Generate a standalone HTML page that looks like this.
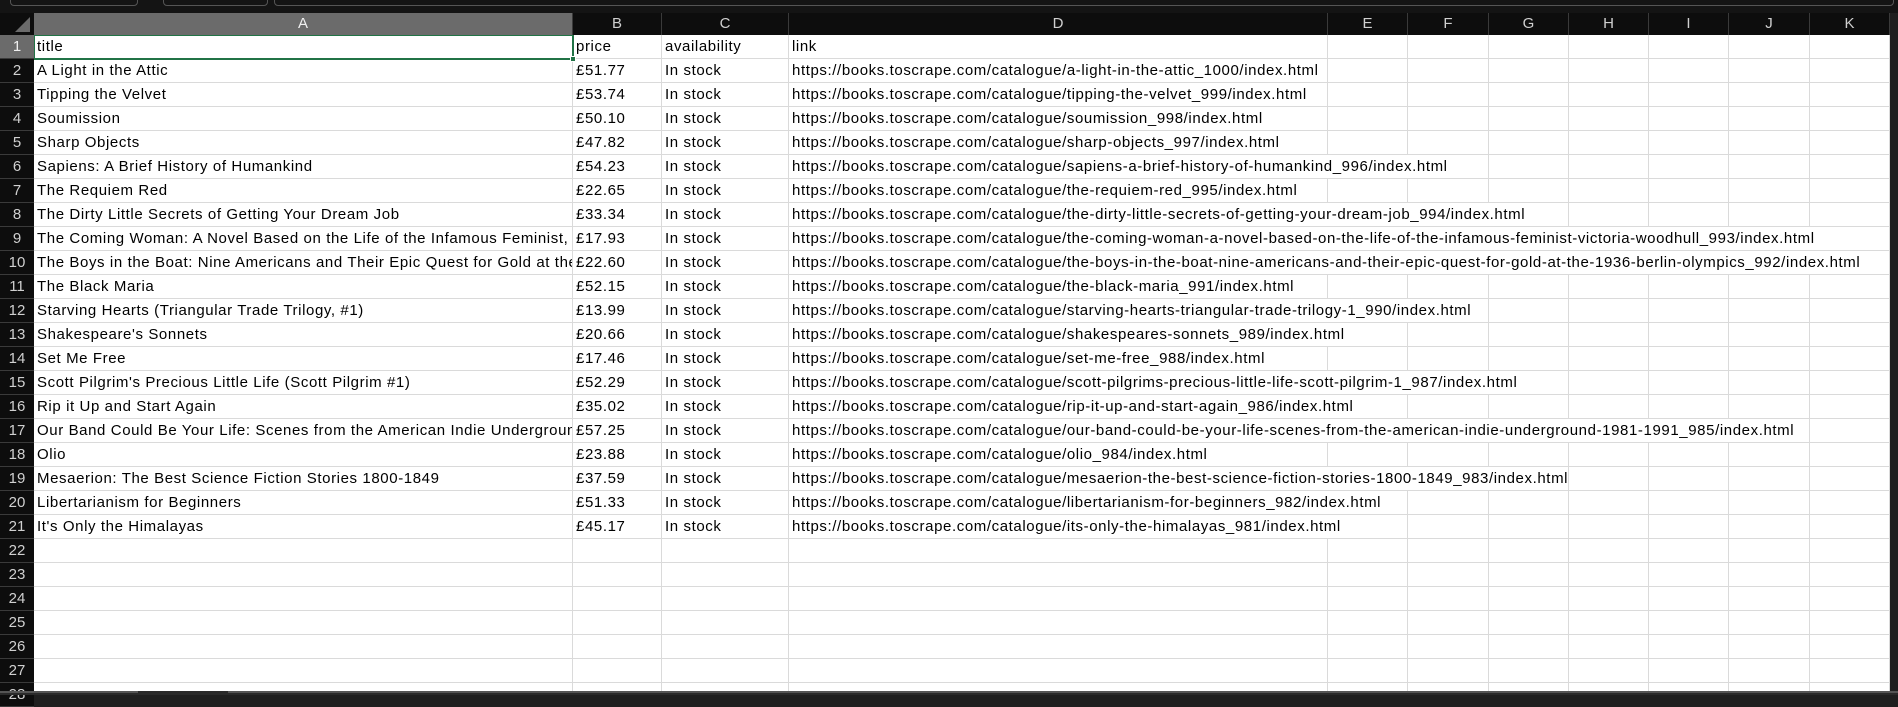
<!DOCTYPE html>
<html><head><meta charset="utf-8"><style>
*{margin:0;padding:0;box-sizing:border-box}
body{width:1898px;height:695px;overflow:hidden;background:#1f1f1f;font-family:"Liberation Sans",sans-serif;position:relative}
#top{position:absolute;left:0;top:0;width:1898px;height:13px;background:#141414}
.tab{position:absolute;top:-6px;height:12px;border:1px solid #555;border-radius:4px}
#sheet{position:absolute;left:34px;top:35px;width:1856px;height:656px;background:#fff;overflow:hidden}
.hdr{position:absolute;top:13px;height:22px;background:#0d0d0d;color:#d0d0d0;font-size:15px;text-align:center;line-height:22px;border-right:1px solid #3a3a3a}
.rh{position:absolute;left:0;width:34px;height:24px;background:#0d0d0d;color:#d0d0d0;font-size:15px;text-align:center;line-height:24px;border-bottom:1px solid #3a3a3a}
.vl{position:absolute;top:0;width:1px;height:656px;background:#dadada}
.hl{position:absolute;left:0;width:1856px;height:1px;background:#dadada}
.t{position:absolute;font-size:15px;letter-spacing:0.6px;color:#000;white-space:nowrap;line-height:24px;height:23px;overflow:hidden}
#bot{position:absolute;left:0;top:691px;width:1898px;height:4px;background:#2a2a2a}
</style></head><body>
<div id="top"><div class="tab" style="left:10px;width:128px"></div><div class="tab" style="left:163px;width:105px"></div><div class="tab" style="left:274px;width:1620px"></div></div>
<div style="position:absolute;left:0;top:13px;width:34px;height:22px;background:#0d0d0d"><svg width="34" height="22"><polygon points="30,4 30,19 15,19" fill="#6b6b6b"/></svg></div>
<div class="hdr" style="left:34px;width:539px;background:#6b6b6b;color:#f0f0f0">A</div>
<div class="hdr" style="left:573px;width:89px">B</div>
<div class="hdr" style="left:662px;width:127px">C</div>
<div class="hdr" style="left:789px;width:539px">D</div>
<div class="hdr" style="left:1328px;width:80px">E</div>
<div class="hdr" style="left:1408px;width:81px">F</div>
<div class="hdr" style="left:1489px;width:80px">G</div>
<div class="hdr" style="left:1569px;width:80px">H</div>
<div class="hdr" style="left:1649px;width:80px">I</div>
<div class="hdr" style="left:1729px;width:81px">J</div>
<div class="hdr" style="left:1810px;width:80px">K</div>
<div class="hdr" style="left:1890px;width:8px;background:#1f1f1f;border:none"></div>
<div id="rows"></div>
<div id="sheet"></div>
<div id="bot"><div style="position:absolute;left:0;top:0;width:138px;height:2px;background:#555"></div><div style="position:absolute;left:228px;top:0;width:1670px;height:2px;background:#555"></div></div>
<script>
var rows=[
["title","price","availability","link"],
["A Light in the Attic","£51.77","In stock","https://books.toscrape.com/catalogue/a-light-in-the-attic_1000/index.html"],
["Tipping the Velvet","£53.74","In stock","https://books.toscrape.com/catalogue/tipping-the-velvet_999/index.html"],
["Soumission","£50.10","In stock","https://books.toscrape.com/catalogue/soumission_998/index.html"],
["Sharp Objects","£47.82","In stock","https://books.toscrape.com/catalogue/sharp-objects_997/index.html"],
["Sapiens: A Brief History of Humankind","£54.23","In stock","https://books.toscrape.com/catalogue/sapiens-a-brief-history-of-humankind_996/index.html"],
["The Requiem Red","£22.65","In stock","https://books.toscrape.com/catalogue/the-requiem-red_995/index.html"],
["The Dirty Little Secrets of Getting Your Dream Job","£33.34","In stock","https://books.toscrape.com/catalogue/the-dirty-little-secrets-of-getting-your-dream-job_994/index.html"],
["The Coming Woman: A Novel Based on the Life of the Infamous Feminist, Victoria Woodhull","£17.93","In stock","https://books.toscrape.com/catalogue/the-coming-woman-a-novel-based-on-the-life-of-the-infamous-feminist-victoria-woodhull_993/index.html"],
["The Boys in the Boat: Nine Americans and Their Epic Quest for Gold at the 1936 Berlin Olympics","£22.60","In stock","https://books.toscrape.com/catalogue/the-boys-in-the-boat-nine-americans-and-their-epic-quest-for-gold-at-the-1936-berlin-olympics_992/index.html"],
["The Black Maria","£52.15","In stock","https://books.toscrape.com/catalogue/the-black-maria_991/index.html"],
["Starving Hearts (Triangular Trade Trilogy, #1)","£13.99","In stock","https://books.toscrape.com/catalogue/starving-hearts-triangular-trade-trilogy-1_990/index.html"],
["Shakespeare's Sonnets","£20.66","In stock","https://books.toscrape.com/catalogue/shakespeares-sonnets_989/index.html"],
["Set Me Free","£17.46","In stock","https://books.toscrape.com/catalogue/set-me-free_988/index.html"],
["Scott Pilgrim's Precious Little Life (Scott Pilgrim #1)","£52.29","In stock","https://books.toscrape.com/catalogue/scott-pilgrims-precious-little-life-scott-pilgrim-1_987/index.html"],
["Rip it Up and Start Again","£35.02","In stock","https://books.toscrape.com/catalogue/rip-it-up-and-start-again_986/index.html"],
["Our Band Could Be Your Life: Scenes from the American Indie Underground, 1981-1991","£57.25","In stock","https://books.toscrape.com/catalogue/our-band-could-be-your-life-scenes-from-the-american-indie-underground-1981-1991_985/index.html"],
["Olio","£23.88","In stock","https://books.toscrape.com/catalogue/olio_984/index.html"],
["Mesaerion: The Best Science Fiction Stories 1800-1849","£37.59","In stock","https://books.toscrape.com/catalogue/mesaerion-the-best-science-fiction-stories-1800-1849_983/index.html"],
["Libertarianism for Beginners","£51.33","In stock","https://books.toscrape.com/catalogue/libertarianism-for-beginners_982/index.html"],
["It's Only the Himalayas","£45.17","In stock","https://books.toscrape.com/catalogue/its-only-the-himalayas_981/index.html"]];
var s=document.getElementById('sheet'),h='';
var cols=[0,539,628,755,1294,1374,1455,1535,1615,1695,1776,1856];
for(var i=1;i<cols.length;i++)h+='<div class="vl" style="left:'+(cols[i]-1)+'px"></div>';
for(var r=1;r<=28;r++)h+='<div class="hl" style="top:'+(r*24-1)+'px"></div>';
rows.forEach(function(d,r){var y=r*24;
h+='<div class="t" style="left:3px;top:'+y+'px;width:535px;background:#fff">'+d[0]+'</div>';
h+='<div class="t" style="left:542px;top:'+y+'px;width:85px;background:#fff">'+d[1]+'</div>';
h+='<div class="t" style="left:631px;top:'+y+'px;width:123px;background:#fff">'+d[2]+'</div>';
h+='<div class="t" style="left:758px;top:'+y+'px;background:#fff">'+d[3]+'</div>';});
h+='<div style="position:absolute;left:-1px;top:-1px;width:541px;height:26px;border:2px solid #217346"></div><div style="position:absolute;left:536px;top:21px;width:6px;height:6px;background:#217346;border:1px solid #fff"></div>';
s.innerHTML=h;
var rr='';for(var r=1;r<=28;r++)rr+='<div class="rh" style="top:'+(35+(r-1)*24)+'px'+(r==1?';background:#6b6b6b;color:#f0f0f0':'')+'">'+r+'</div>';
document.getElementById('rows').innerHTML=rr;
</script>
</body></html>
